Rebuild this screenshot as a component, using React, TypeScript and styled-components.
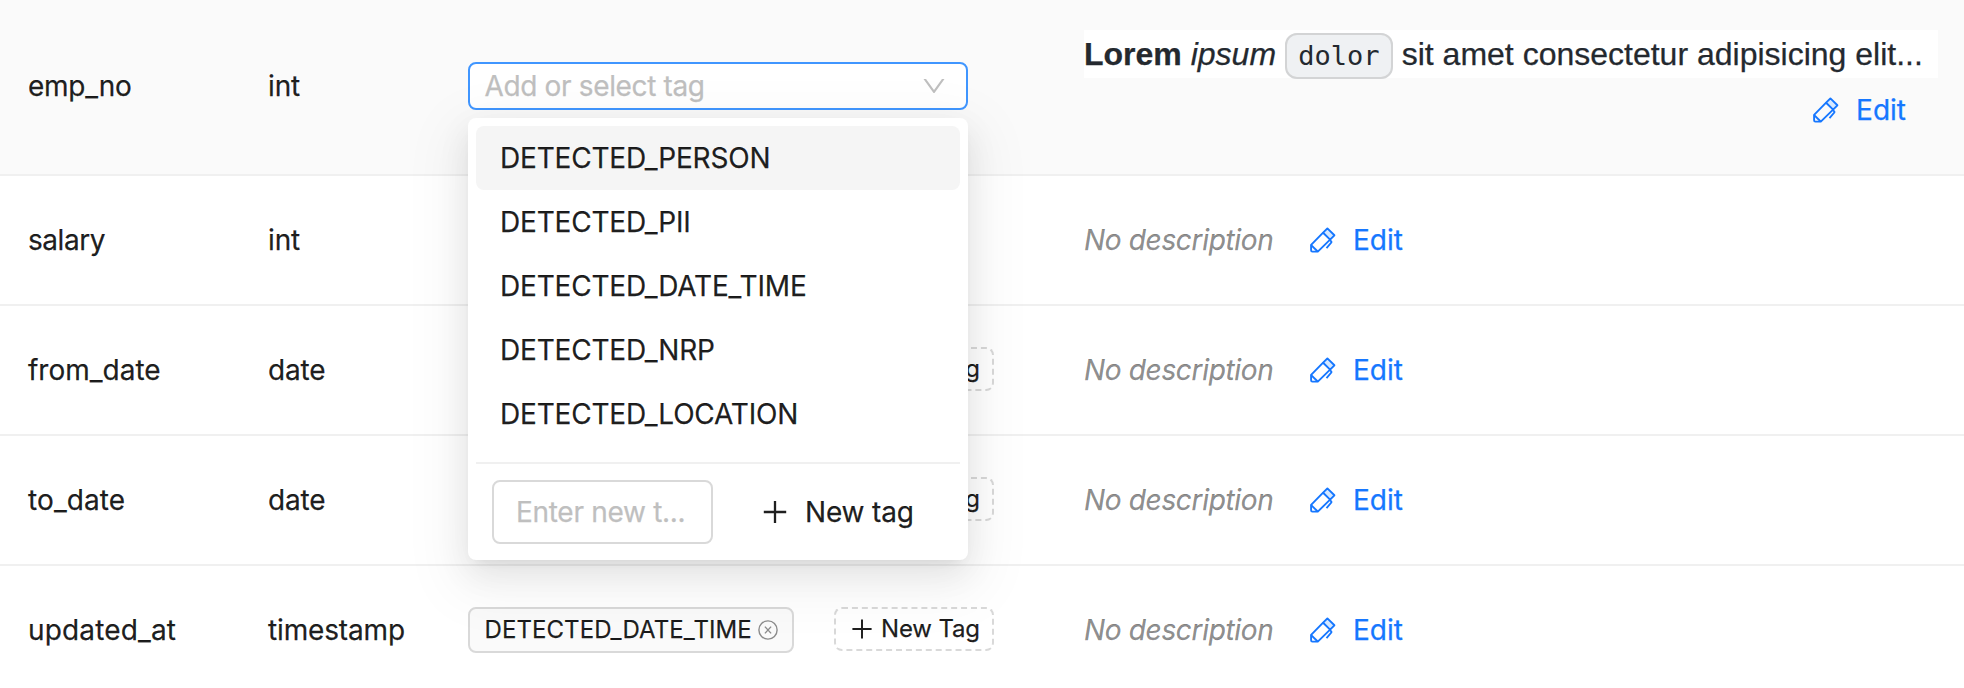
import React from "react";
import styled, { createGlobalStyle } from "styled-components";

const GlobalStyle = createGlobalStyle`
  * { box-sizing: border-box; }
  html, body { margin: 0; height: 688px; overflow: hidden; background: #fff; }
  body {
    font-family: Inter, "Liberation Sans", sans-serif;
    font-size: 28px;
    line-height: 44px;
    letter-spacing: -0.15px;
    color: rgba(0, 0, 0, 0.88);
    -webkit-text-stroke: 0.25px currentColor;
  }
`;

const Table = styled.div`
  display: flex;
  flex-direction: column;
`;

const Row = styled.div<{ $hovered?: boolean }>`
  display: grid;
  grid-template-columns: 240px 200px 616px 854px;
  align-items: center;
  height: ${(p) => (p.$hovered ? 176 : 130)}px;
  padding: ${(p) => (p.$hovered ? "0 26px 2px 28px" : "0 26px 0 28px")};
  border-bottom: 2px solid #f0f0f0;
  background: ${(p) => (p.$hovered ? "#fafafa" : "#fff")};
`;

const Cell = styled.div<{ $tracking?: number }>`
  letter-spacing: ${(p) => p.$tracking ?? -0.15}px;
  white-space: nowrap;
`;

const TagCell = styled.div`
  display: flex;
  align-items: flex-start;
  justify-content: space-between;
  width: 526px;
  height: 46px;
`;

const Tag = styled.span`
  display: inline-flex;
  align-items: center;
  justify-content: space-between;
  width: 326px;
  height: 46px;
  padding: 0 14px 0 14.5px;
  border: 2px solid #d9d9d9;
  border-radius: 8px;
  background: #fafafa;
  font-size: 24px;
  line-height: 40px;
  letter-spacing: 0.08px;
  white-space: nowrap;
`;

const NewTag = styled.button`
  display: inline-flex;
  align-items: center;
  gap: 7px;
  width: 160px;
  height: 44px;
  margin-left: auto;
  padding: 0 0 0 14px;
  border: 2px dashed #d9d9d9;
  border-radius: 8px;
  background: transparent;
  color: inherit;
  font: inherit;
  font-size: 24px;
  line-height: 40px;
  letter-spacing: -0.15px;
  white-space: nowrap;
`;

const Select = styled.div`
  position: relative;
  width: 500px;
`;

const SelectBox = styled.div`
  display: flex;
  align-items: center;
  justify-content: space-between;
  height: 48px;
  padding: 0 18px 0 14.5px;
  border: 2px solid #4096ff;
  border-radius: 8px;
  background: #fff;
  color: #bfbfbf;
  letter-spacing: -0.35px;
`;

const Menu = styled.div`
  position: absolute;
  z-index: 10;
  top: 56px;
  left: 0;
  width: 500px;
  height: 442px;
  padding: 8px;
  border-radius: 8px;
  background: #fff;
  box-shadow: 0 12px 32px 0 rgba(0, 0, 0, 0.08), 0 6px 12px -8px rgba(0, 0, 0, 0.12),
    0 18px 56px 16px rgba(0, 0, 0, 0.05);
`;

const Option = styled.div<{ $active?: boolean }>`
  height: 64px;
  padding: 10px 24px;
  border-radius: 8px;
  background: ${(p) => (p.$active ? "#f5f5f5" : "transparent")};
  letter-spacing: -0.2px;
`;

const Divider = styled.div`
  height: 2px;
  margin: 16px 0;
  background: #f0f0f0;
`;

const MenuFooter = styled.div`
  display: flex;
  align-items: center;
  gap: 16px;
  padding: 0 16px;
`;

const TagInput = styled.div`
  flex: none;
  width: 221px;
  height: 64px;
  padding: 8px 22px;
  border: 2px solid #d9d9d9;
  border-radius: 8px;
  color: #bfbfbf;
  letter-spacing: -0.3px;
  white-space: nowrap;
`;

const TextButton = styled.button<{ $link?: boolean }>`
  display: inline-flex;
  flex: none;
  align-items: center;
  gap: 16px;
  height: 64px;
  padding: 0 32px;
  border: 0;
  background: transparent;
  font: inherit;
  letter-spacing: ${(p) => (p.$link ? 0 : -0.15)}px;
  color: ${(p) => (p.$link ? "#1677ff" : "inherit")};
  white-space: nowrap;
`;

const Description = styled.div`
  display: flex;
  align-items: center;
`;

const Empty = styled.em`
  width: 193px;
  color: rgba(0, 0, 0, 0.45);
  letter-spacing: -0.33px;
  white-space: nowrap;
`;

const FullDescription = styled.div`
  display: flex;
  flex-direction: column;
  align-items: flex-end;
`;

const Markdown = styled.p`
  width: 854px;
  height: 48px;
  margin: 0;
  background: #fff;
  color: #24292f;
  font-family: "Liberation Sans", Arial, sans-serif;
  font-size: 32px;
  line-height: 48px;
  letter-spacing: 0;
  white-space: nowrap;
`;

const Code = styled.code`
  padding: 5px 11.3px 6px;
  border: 2px solid #d3d4d5;
  border-radius: 12px;
  background: #eff1f3;
  font-family: "DejaVu Sans Mono", monospace;
  font-size: 27px;
  line-height: 1;
  -webkit-text-stroke: 0;
`;

const Plus = ({ size }: { size: number }) => (
  <svg width={size} height={size} viewBox="0 0 28 28" fill="none" stroke="currentColor" strokeWidth="2.3">
    <path d="M14 3v22M2.8 14h22.4" />
  </svg>
);

const Chevron = () => (
  <svg width="28" height="28" viewBox="0 0 1024 1024" fill="currentColor">
    <path d="M884 256h-75c-5.1 0-9.9 2.5-12.9 6.6L512 654.2 227.9 262.6c-3-4.1-7.8-6.6-12.9-6.6h-75c-6.5 0-10.3 7.4-6.5 12.7l352.6 486.1c12.8 17.6 39 17.6 51.7 0l352.6-486.1c3.9-5.3.1-12.7-6.4-12.7z" />
  </svg>
);

const CloseCircle = () => (
  <svg width="20" height="20" viewBox="0 0 20 20" fill="none" stroke="#8c8c8c" strokeWidth="1.4">
    <circle cx="10" cy="10" r="9.1" />
    <path d="M6.9 6.6l6.2 6.8M13.1 6.6l-6.2 6.8" />
  </svg>
);

const Pencil = () => (
  <svg width="28" height="28" viewBox="-1.2 -1.5 28 28" fill="none" stroke="currentColor" strokeWidth="1.9" strokeLinejoin="round">
    <path d="M12.9 5.2L17.2.9l7 6.9-4.3 4.3z" fill="#d6e8ff" />
    <path d="M12.9 5.2L.9 17.4v5.4q0 1.3 1.3 1.3h5.4L19.9 12.1" />
    <path d="M1 17.6l6.5 6.4" />
    <path d="M19.6 12.3l1.4 1.5q.6.6.1 1.2l-4.8 5.6" />
  </svg>
);

const EditButton = () => (
  <TextButton $link>
    <Pencil />
    Edit
  </TextButton>
);

const options = ["DETECTED_PERSON", "DETECTED_PII", "DETECTED_DATE_TIME", "DETECTED_NRP", "DETECTED_LOCATION"];

const columns: { name: string; type: string; tag?: string; canAdd?: boolean; tracking: number }[] = [
  { name: "salary", type: "int", tracking: -0.45 },
  { name: "from_date", type: "date", canAdd: true, tracking: 0 },
  { name: "to_date", type: "date", canAdd: true, tracking: 0.1 },
  { name: "updated_at", type: "timestamp", tag: "DETECTED_DATE_TIME", canAdd: true, tracking: 0.15 },
];

export default function App() {
  return (
    <>
      <GlobalStyle />
      <Table>
        <Row $hovered>
          <Cell $tracking={-0.25}>emp_no</Cell>
          <Cell>int</Cell>
          <Select>
            <SelectBox>
              Add or select tag
              <Chevron />
            </SelectBox>
            <Menu>
              {options.map((option, i) => (
                <Option key={option} $active={i === 0}>
                  {option}
                </Option>
              ))}
              <Divider />
              <MenuFooter>
                <TagInput>Enter new t...</TagInput>
                <TextButton>
                  <Plus size={28} />
                  New tag
                </TextButton>
              </MenuFooter>
            </Menu>
          </Select>
          <FullDescription>
            <Markdown>
              <strong>Lorem</strong> <em>ipsum</em> <Code>dolor</Code> sit amet consectetur adipisicing elit...
            </Markdown>
            <EditButton />
          </FullDescription>
        </Row>
        {columns.map((column) => (
          <Row key={column.name}>
            <Cell $tracking={column.tracking}>{column.name}</Cell>
            <Cell>{column.type}</Cell>
            <TagCell>
              {column.tag && (
                <Tag>
                  {column.tag}
                  <CloseCircle />
                </Tag>
              )}
              {column.canAdd && (
                <NewTag>
                  <Plus size={24} />
                  New Tag
                </NewTag>
              )}
            </TagCell>
            <Description>
              <Empty>No description</Empty>
              <EditButton />
            </Description>
          </Row>
        ))}
      </Table>
    </>
  );
}
